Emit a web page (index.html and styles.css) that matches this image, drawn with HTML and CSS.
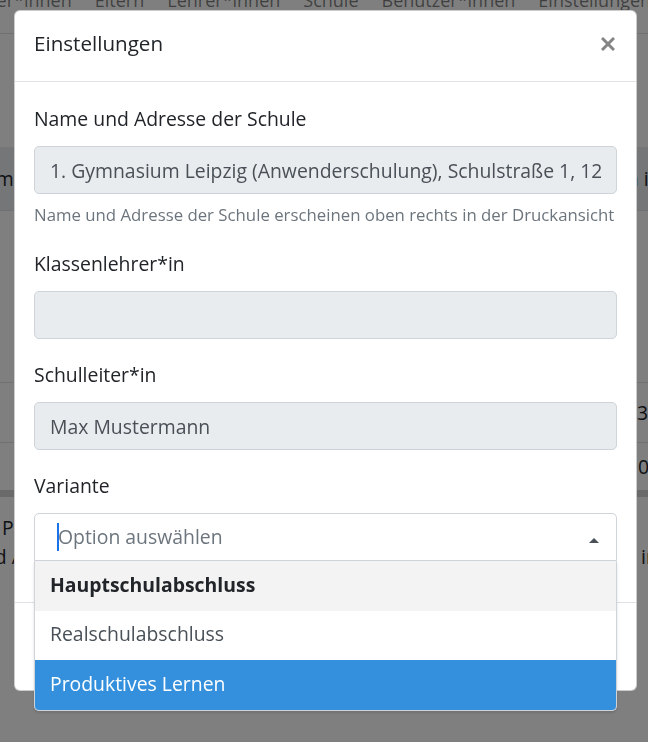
FILE: index.html
```html
<!DOCTYPE html>
<html lang="de">
<head>
    <meta charset="UTF-8">
    <meta name="viewport" content="width=device-width, initial-scale=1.0">
    <title>Einstellungen</title>
    <link rel="stylesheet" href="styles.css">
</head>
<body>

    <div class="page">
        <nav class="topnav">
            <a href="#">Schüler*innen</a>
            <a href="#">Eltern</a>
            <a href="#">Lehrer*innen</a>
            <a href="#">Schule</a>
            <a href="#">Benutzer*innen</a>
            <a href="#">Einstellungen</a>
        </nav>

        <h2 class="page-title">Zeugnisse</h2>

        <table class="list">
            <colgroup>
                <col class="col-date">
                <col class="col-name">
                <col class="col-info">
            </colgroup>
            <thead>
                <tr>
                    <th class="first">Datum</th>
                    <th>Schüler*in</th>
                    <th>Lernen im Fach</th>
                </tr>
            </thead>
            <tbody>
                <tr class="row-tall">
                    <td></td>
                    <td>Anna Beispiel</td>
                    <td></td>
                </tr>
                <tr class="row-mid">
                    <td></td>
                    <td>Ben Beispiel</td>
                    <td>Klasse 3</td>
                </tr>
                <tr class="row-low">
                    <td></td>
                    <td>Carla Beispiel</td>
                    <td>Stufe 10 (PL)</td>
                </tr>
            </tbody>
        </table>

        <div class="legend">
            <div class="legend-line first-line">Produktives Lernen: Bewertung nach Praxisphasen</div>
            <div class="legend-line second-line">
                <span>und Abschlussnote der Schule</span>
                <span>inkl.</span>
            </div>
        </div>
    </div>

    <div class="backdrop">
        <div class="modal">
            <div class="modal-header">
                <h5 class="modal-title">Einstellungen</h5>
                <button type="button" class="close" aria-label="Schließen">
                    <svg width="14" height="14" viewBox="0 0 14 14">
                        <path d="M1 1L13 13M13 1L1 13" stroke="#858585" stroke-width="3" fill="none"/>
                    </svg>
                </button>
            </div>

            <div class="modal-body">
                <div class="form-group">
                    <label for="school-name">Name und Adresse der Schule</label>
                    <input type="text" id="school-name" class="form-control" value="1. Gymnasium Leipzig (Anwenderschulung), Schulstraße 1, 12345 Leipzig" disabled>
                    <small class="form-text">Name und Adresse der Schule erscheinen oben rechts in der Druckansicht</small>
                </div>

                <div class="form-group">
                    <label for="class-teacher">Klassenlehrer*in</label>
                    <input type="text" id="class-teacher" class="form-control" value="" disabled>
                </div>

                <div class="form-group">
                    <label for="principal">Schulleiter*in</label>
                    <input type="text" id="principal" class="form-control" value="Max Mustermann" disabled>
                </div>

                <div class="form-group">
                    <label>Variante</label>
                    <div class="multiselect">
                        <div class="ms-control">
                            <span class="ms-caret"></span>
                            <span class="ms-placeholder">Option auswählen</span>
                            <span class="ms-arrow"></span>
                        </div>
                        <ul class="ms-menu">
                            <li class="ms-option selected">Hauptschulabschluss</li>
                            <li class="ms-option">Realschulabschluss</li>
                            <li class="ms-option highlight">Produktives Lernen</li>
                        </ul>
                    </div>
                </div>
            </div>

            <div class="modal-footer"></div>
        </div>
    </div>

</body>
</html>
```

FILE: styles.css
```css
html,
body {
    overflow: hidden;
}

body {
    margin: 0;
    font-family: "Open Sans", "Noto Sans", Arial, sans-serif;
    font-size: 19.4px;
    line-height: 1.5;
    color: #212529;
    background-color: #fff;
}

/* page behind the dialog */
.page {
    width: 760px;
    margin: -22px 0 0 -69px;
}

.topnav {
    display: flex;
    padding: 8px 0 18px 9px;
    font-size: 18px;
    line-height: 29px;
    border-bottom: 1px solid rgba(0, 0, 0, 0.12);
}

.topnav a {
    padding: 0 11.5px;
    color: rgba(0, 0, 0, 0.5);
    text-decoration: none;
    white-space: nowrap;
}

.page-title {
    margin: 0;
    padding: 40px 0 40px 110px;
    font-size: 22px;
    font-weight: 400;
    line-height: 33px;
}

.list {
    width: 760px;
    table-layout: fixed;
    border-collapse: collapse;
    border-bottom: 7px solid #d5d5d5;
}

.col-date {
    width: 160px;
}

.col-info {
    width: 128px;
}

.list th {
    height: 63px;
    padding: 0 12px;
    background-color: #e9ecef;
    text-align: left;
    font-weight: 400;
    white-space: nowrap;
    overflow: hidden;
}

.list th.first {
    padding-left: 21px;
}

.list td {
    padding: 0 12px;
    border-top: 1px solid #dee2e6;
    white-space: nowrap;
    overflow: hidden;
}

.row-tall td {
    height: 171px;
}

.row-mid td {
    height: 59px;
}

.row-low td {
    height: 47px;
}

.legend {
    margin-top: 16px;
}

.legend-line {
    line-height: 29px;
    white-space: nowrap;
}

.first-line {
    padding-left: 71px;
}

.second-line {
    display: flex;
    justify-content: space-between;
    padding: 0 13px 0 40px;
}

/* dialog */
.backdrop {
    position: fixed;
    top: 0;
    left: 0;
    right: 0;
    bottom: 0;
    background-color: rgba(0, 0, 0, 0.5);
}

.modal {
    box-sizing: border-box;
    width: 623px;
    margin: 10px 0 0 14px;
    background-color: #fff;
    border: 1px solid rgba(0, 0, 0, 0.2);
    border-radius: 6px;
}

.modal-header {
    display: flex;
    justify-content: space-between;
    align-items: flex-start;
    padding: 17px 19px 22px;
    border-bottom: 1px solid #dee2e6;
}

.modal-title {
    margin: 0;
    font-size: 20.6px;
    font-weight: 400;
    line-height: 31px;
}

.close {
    margin: 9px 2px 0 0;
    padding: 0;
    border: 0;
    background: none;
    line-height: 0;
    cursor: pointer;
}

.modal-body {
    padding: 22px 19px 20px;
}

.form-group {
    margin-bottom: 21px;
}

.form-group label {
    display: block;
    line-height: 29px;
    margin-bottom: 13px;
}

.form-control {
    display: block;
    box-sizing: border-box;
    width: 100%;
    height: 48px;
    padding: 0 15px;
    font: inherit;
    color: #495057;
    background-color: #e9ecef;
    border: 1px solid #ced4da;
    border-radius: 5px;
    opacity: 1;
}

.form-text {
    display: block;
    margin-top: 8px;
    font-size: 16.8px;
    line-height: 26px;
    color: #6c757d;
}

.multiselect {
    position: relative;
}

.ms-control {
    box-sizing: border-box;
    display: flex;
    align-items: center;
    height: 48px;
    padding: 0 17px 0 22px;
    border: 1px solid #ced4da;
    border-radius: 5px 5px 0 0;
}

.ms-caret {
    width: 2px;
    height: 28px;
    margin-right: -1px;
    background-color: #1a73e8;
}

.ms-placeholder {
    flex: 1;
    color: #6c757d;
}

.ms-arrow {
    width: 0;
    height: 0;
    margin-top: 7px;
    border-left: 5.5px solid transparent;
    border-right: 5.5px solid transparent;
    border-bottom: 5px solid #495057;
}

.ms-menu {
    position: absolute;
    top: 48px;
    left: 0;
    right: 0;
    z-index: 2;
    margin: 0;
    padding: 0;
    list-style: none;
    background-color: #fff;
    border: 1px solid #ced4da;
    border-top: 0;
    border-radius: 0 0 5px 5px;
    box-shadow: 0 2px 3px rgba(0, 0, 0, 0.12);
    overflow: hidden;
}

.ms-option {
    box-sizing: border-box;
    height: 49.5px;
    padding: 8.5px 16px 0 15px;
    line-height: 29px;
    color: #495057;
}

.ms-option.selected {
    background-color: #f3f3f3;
    font-weight: 700;
    color: #212529;
}

.ms-option.highlight {
    background-color: #3490dc;
    color: #fff;
}

.modal-footer {
    height: 87px;
    border-top: 1px solid #dee2e6;
}
```
